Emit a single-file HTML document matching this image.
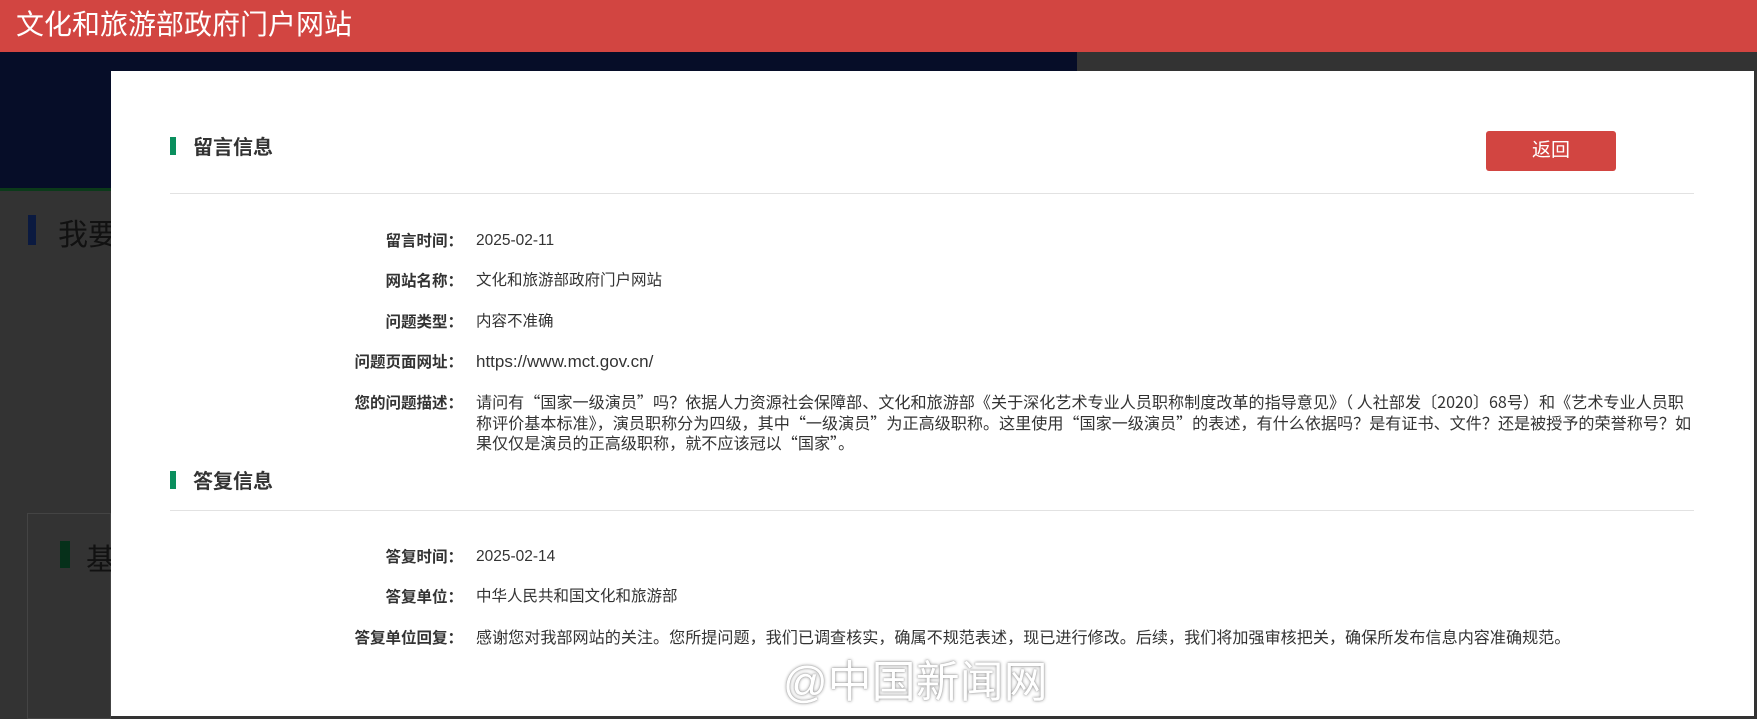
<!DOCTYPE html>
<html><head><meta charset="utf-8"><style>
*{margin:0;padding:0;box-sizing:border-box}
body{width:1757px;height:719px;overflow:hidden;background:#333;position:relative;font-family:"Liberation Sans","Noto Sans CJK SC",sans-serif;color:#333}
.hdr{position:absolute;left:0;top:0;width:1757px;height:52px;background:#d24541;color:#fff;font-size:28px;line-height:50px;padding-left:16px}
.blue{position:absolute;left:0;top:52px;width:1077px;height:136px;background:#060d28}
.gline{position:absolute;left:0;top:188px;width:1077px;height:3px;background:#0b3a1a}
.bgtxt{position:absolute;color:#111;font-size:30px}
.modal{position:absolute;left:111px;top:71px;width:1643px;height:645px;background:#fff}
.sec{position:absolute;left:59px;font-size:20px;font-weight:bold;color:#333}
.sec i{position:absolute;left:0;top:6px;width:6px;height:18px;background:#0a8f5e}
.sec span{margin-left:23px}
.hr{position:absolute;left:59px;width:1524px;height:1px;background:#e2e2e2}
.btn{position:absolute;left:1375px;top:60px;width:130px;height:40px;background:#d24541;border-radius:3px;color:#fff;font-size:19px;text-align:center;line-height:40px}
.lab{position:absolute;right:1291px;font-size:15.5px;font-weight:bold;color:#333;white-space:nowrap;font-family:"Noto Sans CJK SC",sans-serif;margin-top:-2px}
.val{position:absolute;left:365px;font-size:15.5px;color:#333;white-space:nowrap;line-height:20.5px}
.cjk{font-family:"Noto Sans CJK SC",sans-serif;font-size:16.1px}
.wm{position:absolute;left:783px;top:646px;font-size:44px;color:#fff;text-shadow:0 0 3px #888,0 0 1px #999;white-space:nowrap}
</style></head><body>
<div class="hdr">文化和旅游部政府门户网站</div>
<div class="blue"></div>
<div class="gline"></div>
<div style="position:absolute;left:28px;top:215px;width:8px;height:30px;background:#0b1a40"></div>
<div class="bgtxt" style="left:58px;top:210px">我要</div>
<div style="position:absolute;left:27px;top:513px;width:84px;height:206px;border:1px solid #444"></div>
<div style="position:absolute;left:60px;top:541px;width:10px;height:27px;background:#06301a"></div>
<div class="bgtxt" style="left:86px;top:535px">基</div>
<div class="modal">
<div class="sec" style="top:60px"><i></i><span>留言信息</span></div>
<div class="btn">返回</div>
<div class="hr" style="top:122px"></div>
<div class="lab" style="top:160px">留言时间：</div><div class="val" style="top:160px">2025-02-11</div>
<div class="lab" style="top:200px">网站名称：</div><div class="val" style="top:200px">文化和旅游部政府门户网站</div>
<div class="lab" style="top:241px">问题类型：</div><div class="val" style="top:241px">内容不准确</div>
<div class="lab" style="top:281px">问题页面网址：</div><div class="val" style="top:281px;font-size:17px">https://www.mct.gov.cn/</div>
<div class="lab" style="top:322px">您的问题描述：</div>
<div class="val cjk" style="top:320px">请问有“国家一级演员”吗？依据人力资源社会保障部、文化和旅游部《关于深化艺术专业人员职称制度改革的指导意见》（ 人社部发〔2020〕68号）和《艺术专业人员职<br>称评价基本标准》，演员职称分为四级，其中“一级演员”为正高级职称。这里使用“国家一级演员”的表述，有什么依据吗？是有证书、文件？还是被授予的荣誉称号？如<br>果仅仅是演员的正高级职称，就不应该冠以“国家”。</div>
<div class="sec" style="top:394px"><i></i><span>答复信息</span></div>
<div class="hr" style="top:439px"></div>
<div class="lab" style="top:476px">答复时间：</div><div class="val" style="top:476px">2025-02-14</div>
<div class="lab" style="top:516px">答复单位：</div><div class="val" style="top:516px">中华人民共和国文化和旅游部</div>
<div class="lab" style="top:557px">答复单位回复：</div><div class="val cjk" style="top:555px">感谢您对我部网站的关注。您所提问题，我们已调查核实，确属不规范表述，现已进行修改。后续，我们将加强审核把关，确保所发布信息内容准确规范。</div>
</div>
<div class="wm">@中国新闻网</div>
</body></html>
